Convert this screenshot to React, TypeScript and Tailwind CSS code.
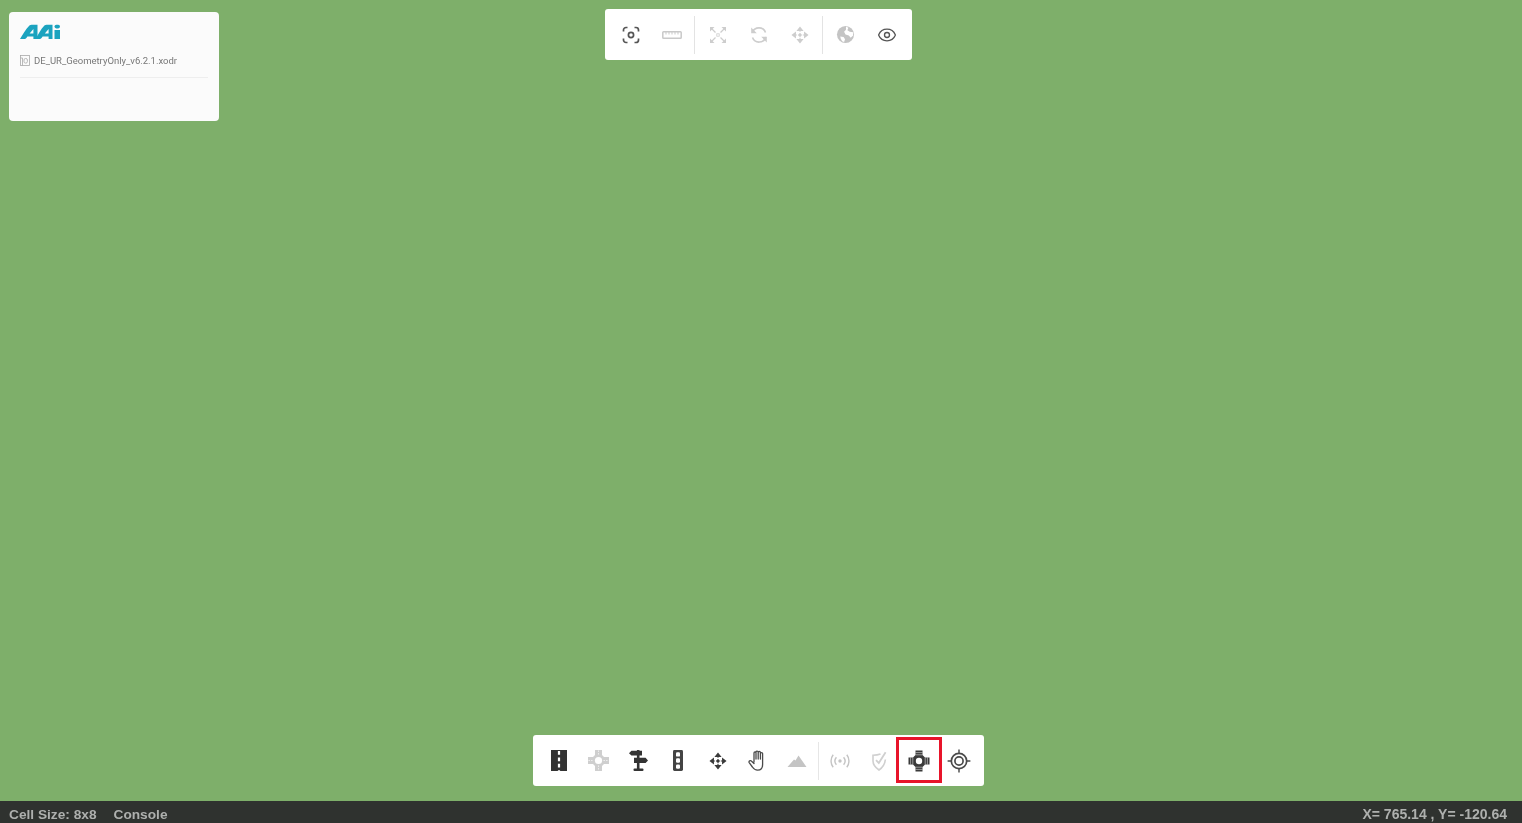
import type { ReactNode } from "react";
import { Eye } from "lucide-react";

const sans = "font-['Roboto','Liberation_Sans',sans-serif]";

function Glyph({ children, size = 20, className = "" }: { children: ReactNode; size?: number; className?: string }) {
  return (
    <svg width={size} height={size} viewBox="0 0 20 20" fill="none" className={className}>
      {children}
    </svg>
  );
}

function AaiLogo() {
  return (
    <svg width="41" height="16" viewBox="0 0 41 16">
      <path d="M0 15 C3 10 6 5 9 2 C10 1 11 0.8 12.5 0.8 H17.5 V15 H13.4 V12.6 H7.4 C6.6 13.8 5.6 15 5 15 Z M9.6 9.6 H13.4 V5 Z" fill="#1ba3bf" fillRule="evenodd" />
      <path d="M15.5 15 C18.5 10 21 5 24 2 C25 1 26 0.8 27.5 0.8 H32.5 V15 H28.6 V12.6 H22.6 C21.8 13.8 20.8 15 20 15 Z M24.8 9.6 H28.6 V5 Z" fill="#1ba3bf" fillRule="evenodd" />
      <rect x="34.5" y="0.8" width="5.5" height="3.6" rx="1.8" fill="#1ba3bf" />
      <rect x="34.5" y="6" width="5.5" height="9" fill="#1ba3bf" />
    </svg>
  );
}

function FileIcon() {
  return (
    <svg width="10" height="11" viewBox="0 0 10 11" fill="none" stroke="#a8a8a8" strokeWidth="0.8">
      <rect x="0.5" y="0.5" width="9" height="10" />
      <path d="M0.5 3H2.5V10.5" />
      <rect x="4" y="3.5" width="3.4" height="4.6" rx="1.5" />
    </svg>
  );
}

function ScanIcon() {
  return (
    <Glyph className="text-[#555]">
      <path d="M2.5 6.5V5A2.5 2.5 0 0 1 5 2.5H6.5M13.5 2.5H15A2.5 2.5 0 0 1 17.5 5V6.5M17.5 13.5V15A2.5 2.5 0 0 1 15 17.5H13.5M6.5 17.5H5A2.5 2.5 0 0 1 2.5 15V13.5" stroke="currentColor" strokeWidth="1.7" />
      <circle cx="10" cy="10" r="2.6" stroke="currentColor" strokeWidth="1.7" />
    </Glyph>
  );
}

function RulerIcon() {
  return (
    <Glyph className="text-[#c9c9c9]">
      <rect x="0.8" y="6.8" width="18.4" height="6.4" rx="0.8" stroke="currentColor" strokeWidth="1.5" />
      <path d="M4 7V9.5M7 7V9.5M10 7V9.5M13 7V9.5M16 7V9.5" stroke="currentColor" strokeWidth="1" />
    </Glyph>
  );
}

function ExpandIcon() {
  return (
    <Glyph className="text-[#cdcdcd]">
      <path d="M3 3L7.5 7.5M17 3L12.5 7.5M3 17L7.5 12.5M17 17L12.5 12.5" stroke="currentColor" strokeWidth="1.3" />
      <path d="M2 2H6.5L2 6.5ZM18 2H13.5L18 6.5ZM2 18H6.5L2 13.5ZM18 18H13.5L18 13.5Z" fill="currentColor" />
      <rect x="8.8" y="8.8" width="2.4" height="2.4" stroke="currentColor" strokeWidth="0.8" />
    </Glyph>
  );
}

function RotateIcon() {
  return (
    <Glyph className="text-[#cdcdcd]">
      <path d="M3.5 7A7 7 0 0 1 16.5 7.5M16.8 12A7 7 0 0 1 3.5 12.5" stroke="currentColor" strokeWidth="1.6" />
      <path d="M2.2 2.6V8.2H7.8ZM17.8 17.4V11.8H12.2Z" fill="currentColor" />
    </Glyph>
  );
}

function MoveIcon({ color, size = 18 }: { color: string; size?: number }) {
  return (
    <Glyph size={size} className={color}>
      <path d="M10 0.5L14 5.5H6ZM10 19.5L6 14.5H14ZM0.5 10L5.5 6V14ZM19.5 10L14.5 14V6Z" fill="currentColor" />
      <circle cx="10" cy="10" r="1.7" fill="currentColor" />
      <path d="M10 5V15M5 10H15" stroke="currentColor" strokeWidth="1.2" strokeDasharray="1.5 1.2" />
    </Glyph>
  );
}

function GlobeIcon() {
  return (
    <Glyph size={19} className="text-[#c4c4c4]">
      <circle cx="10" cy="10" r="9" fill="currentColor" />
      <path d="M10.5 1.5L13 3L12 5.5L14.5 7L18 7.5V11L15.5 13.5L13.5 11L10 10L8.5 7L10.5 5ZM4.5 12L8 12.5L9.5 15L8.5 18L6.5 17L5 14.5Z" fill="#fff" />
    </Glyph>
  );
}

function RoadIcon() {
  return (
    <svg width="16" height="21" viewBox="0 0 16 21" fill="none">
      <rect width="16" height="21" fill="#333" />
      <path d="M8 1V21" stroke="#fff" strokeWidth="2.2" strokeDasharray="3.8 2.6" />
    </svg>
  );
}

function CrossRoadIcon() {
  return (
    <svg width="21" height="21" viewBox="0 0 21 21" fill="none">
      <path d="M7 0H14V5L16 7H21V14H16L14 16V21H7V16L5 14H0V7H5L7 5Z" fill="#cfcfcf" />
      <circle cx="10.5" cy="10.5" r="3.6" fill="#fff" />
      <path d="M10.5 0.5V5.5M10.5 15.5V20.5M0.5 10.5H5.5M15.5 10.5H20.5" stroke="#fff" strokeWidth="0.7" strokeDasharray="1.4 1.2" />
    </svg>
  );
}

function SignpostIcon() {
  return (
    <svg width="19" height="21" viewBox="0 0 19 21" fill="none">
      <path d="M0 3.2L2.4 0.8H13V5.6H2.4ZM19 10.4L16.6 7.8H5V13H16.6Z" fill="#333" />
      <rect x="7.9" y="0" width="2.6" height="20" fill="#333" />
      <rect x="4.5" y="18.6" width="10" height="2.4" rx="1" fill="#333" />
    </svg>
  );
}

function LaneIcon() {
  return (
    <svg width="10" height="21" viewBox="0 0 10 21" fill="none">
      <rect width="10" height="21" rx="1.4" fill="#444" />
      <rect x="3" y="2.2" width="4" height="4.4" rx="1.2" fill="#fff" />
      <rect x="3" y="8.3" width="4" height="4.4" rx="1.2" fill="#fff" />
      <rect x="3" y="14.4" width="4" height="4.4" rx="1.2" fill="#fff" />
    </svg>
  );
}

function HandIcon() {
  return (
    <svg width="18" height="21" viewBox="0 0 18 21" fill="none" stroke="#4a4a4a" strokeWidth="1.3" strokeLinejoin="round" strokeLinecap="round">
      <path d="M6 12V3C6 1.6 8 1.6 8 3V9M8 9V2C8 0.7 10.2 0.7 10.2 2V9M10.2 9V2.4C10.2 1.1 12.4 1.1 12.4 2.4V9M12.4 9V3.6C12.4 2.4 14.6 2.4 14.6 3.6V14.5C14.6 18 12.6 20.2 9.6 20.2C7 20.2 5.6 18.8 4.4 17L1.2 12.6C0.3 11.2 2.4 9.8 3.6 11.2L6 13.5" />
    </svg>
  );
}

function MountainIcon() {
  return (
    <Glyph className="text-[#c4c4c4]">
      <path d="M0.5 16L7 8.5L8.5 9.5L11.5 4.5L19.5 16Z" fill="currentColor" />
    </Glyph>
  );
}

function SignalIcon() {
  return (
    <Glyph className="text-[#c4c4c4]">
      <circle cx="10" cy="10" r="1.7" fill="currentColor" />
      <path d="M6.4 6.2A6 6 0 0 0 6.4 13.8M13.6 6.2A6 6 0 0 1 13.6 13.8M3.2 3.8A10 10 0 0 0 3.2 16.2M16.8 3.8A10 10 0 0 1 16.8 16.2" stroke="currentColor" strokeWidth="1.4" />
    </Glyph>
  );
}

function ShieldCheckIcon() {
  return (
    <svg width="15" height="20" viewBox="0 0 15 20" fill="none" stroke="#d0d0d0">
      <path d="M8.5 3C6 4 3.5 4.2 1 4.2V10C1 14 4 17 7 19C10 17 12.8 14 13.4 8.5" strokeWidth="1.6" />
      <path d="M4 9.2L6.8 12L13.6 1.2" strokeWidth="1.8" />
    </svg>
  );
}

function JunctionIcon() {
  return (
    <svg width="22" height="22" viewBox="0 0 22 22" fill="none">
      <path d="M7.5 0.5H14.5V5L17 7.5H21.5V14.5H17L14.5 17V21.5H7.5V17L5 14.5H0.5V7.5H5L7.5 5Z" fill="#3a3a3a" />
      <circle cx="11" cy="11" r="3.2" fill="#fff" />
      <path d="M7.5 2.6H14.5M7.5 4.8H14.5M7.5 17.2H14.5M7.5 19.4H14.5M2.6 7.5V14.5M4.8 7.5V14.5M17.2 7.5V14.5M19.4 7.5V14.5" stroke="#fff" strokeWidth="0.5" />
    </svg>
  );
}

function TargetIcon() {
  return (
    <Glyph size={24} className="text-[#4a4a4a]">
      <circle cx="10" cy="10" r="6.4" stroke="currentColor" strokeWidth="1.4" />
      <circle cx="10" cy="10" r="3.4" stroke="currentColor" strokeWidth="1.4" />
      <path d="M10 0.5V3.5M10 16.5V19.5M0.5 10H3.5M16.5 10H19.5" stroke="currentColor" strokeWidth="1.2" />
    </Glyph>
  );
}

function ToolSlot({ children, width }: { children: ReactNode; width: string }) {
  return <div className={`flex h-full items-center justify-center ${width}`}>{children}</div>;
}

function TopToolbar() {
  return (
    <div className="ml-[386px] mt-[9px] flex h-[51px] w-[307px] items-center rounded-[3px] bg-white pl-[5px] blur-[0.4px]">
      <ToolSlot width="w-[41px]"><ScanIcon /></ToolSlot>
      <ToolSlot width="w-[41px]"><RulerIcon /></ToolSlot>
      <div className="mx-[2px] h-[38px] w-px bg-[#e3e3e3]" />
      <ToolSlot width="w-[41px]"><ExpandIcon /></ToolSlot>
      <ToolSlot width="w-[41px]"><RotateIcon /></ToolSlot>
      <ToolSlot width="w-[41px]"><MoveIcon color="text-[#cdcdcd]" /></ToolSlot>
      <div className="mx-[2px] h-[38px] w-px bg-[#e3e3e3]" />
      <ToolSlot width="w-[41px]"><GlobeIcon /></ToolSlot>
      <ToolSlot width="w-[41px]"><Eye size={20} strokeWidth={1.6} className="text-[#555]" /></ToolSlot>
    </div>
  );
}

function BottomToolbar() {
  return (
    <div className="mb-[15px] ml-[533px] flex h-[51px] w-[451px] items-center rounded-[3px] bg-white pl-[6px] blur-[0.4px]">
      <ToolSlot width="w-[39.7px]"><RoadIcon /></ToolSlot>
      <ToolSlot width="w-[39.7px]"><CrossRoadIcon /></ToolSlot>
      <ToolSlot width="w-[39.7px]"><SignpostIcon /></ToolSlot>
      <ToolSlot width="w-[39.7px]"><LaneIcon /></ToolSlot>
      <ToolSlot width="w-[39.7px]"><MoveIcon color="text-[#3a3a3a]" /></ToolSlot>
      <ToolSlot width="w-[39.7px]"><HandIcon /></ToolSlot>
      <ToolSlot width="w-[39.7px]"><MountainIcon /></ToolSlot>
      <div className="mx-[1px] h-[38px] w-px bg-[#e6e6e6]" />
      <ToolSlot width="w-[39.7px]"><SignalIcon /></ToolSlot>
      <ToolSlot width="w-[39.7px]"><ShieldCheckIcon /></ToolSlot>
      <ToolSlot width="w-[39.7px]">
        <div className="relative flex h-full w-full items-center justify-center">
          <JunctionIcon />
          <div className="absolute left-[-3px] top-[2px] h-[46px] w-[46px] border-[3px] border-[#e8142a]" />
        </div>
      </ToolSlot>
      <ToolSlot width="w-[39.7px]"><TargetIcon /></ToolSlot>
    </div>
  );
}

export default function App() {
  return (
    <div className={`flex h-[823px] w-[1522px] flex-col overflow-hidden bg-[#7eaf6a] ${sans}`}>
      <main className="flex flex-1 flex-col justify-between">
        <div className="flex items-start">
          <section className="ml-[9px] mt-[12px] h-[109px] w-[210px] rounded-[4px] bg-[#fbfbfb] px-[11px] pt-[12px] blur-[0.4px]">
            <AaiLogo />
            <div className="mt-[15px] flex items-center gap-[4px] text-[9.5px] leading-[11px] text-[#777]">
              <FileIcon />
              <span>DE_UR_GeometryOnly_v6.2.1.xodr</span>
            </div>
            <div className="mt-[11px] h-px bg-[#eeeeee]" />
          </section>
          <TopToolbar />
        </div>
        <BottomToolbar />
      </main>
      <footer className="flex h-[22px] items-end justify-between bg-[#2f322f] pl-[9px] pr-[15px] font-['Liberation_Sans',sans-serif] font-bold leading-[17px] text-[#aeb0ae]">
        <div className="flex gap-[17px] text-[13.7px] blur-[0.4px]">
          <span>Cell Size: 8x8</span>
          <span>Console</span>
        </div>
        <span className="text-[14px] blur-[0.4px]">X= 765.14 , Y= -120.64</span>
      </footer>
    </div>
  );
}
